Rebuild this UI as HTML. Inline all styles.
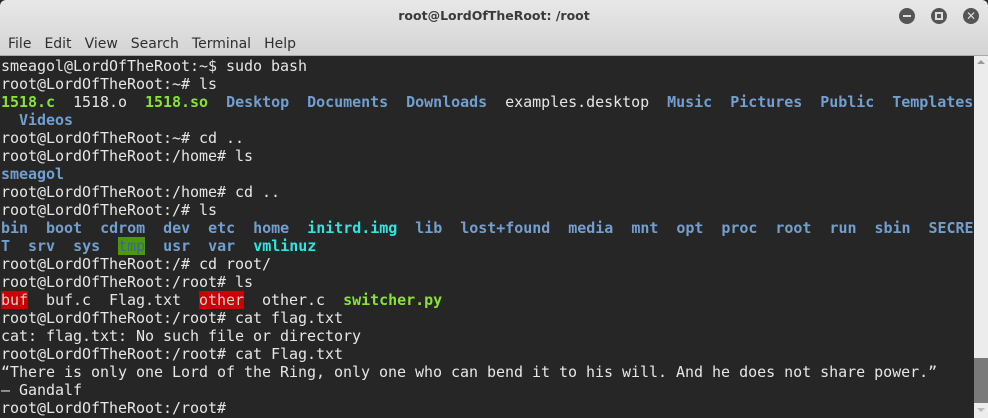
<!DOCTYPE html>
<html><head><meta charset="utf-8"><style>
*{margin:0;padding:0;box-sizing:border-box}
body{width:988px;height:418px;overflow:hidden;background:#262626;position:relative;font-family:"DejaVu Sans","Liberation Sans",sans-serif}
#top{position:absolute;left:0;top:0;width:988px;height:56px;background:linear-gradient(#e8e8e8,#d4d4d4);border-bottom:1px solid #a8a8a8;border-radius:6px 6px 0 0}
#title{position:absolute;top:8px;left:0;width:988px;text-align:center;font-weight:bold;font-size:12.5px;color:#3a3a3a}
#menu{position:absolute;top:36px;left:8px;font-size:14px;color:#2e2e2e}
#menu span{margin-right:13px}
.btn{position:absolute;top:8px;width:16px;height:16px;border-radius:50%;background:#555}
#term{position:absolute;left:1px;top:57px;font-family:"DejaVu Sans Mono","Liberation Mono",monospace;font-size:15px;letter-spacing:-0.03px;line-height:18px;color:#e6e6e6;white-space:pre}
.b{color:#729fcf;font-weight:bold}.g{color:#8ae234;font-weight:bold}.c{color:#34e2e2;font-weight:bold}
.r{background:#cc0000;color:#d3d7cf}.t{background:#4e9a06;color:#3465a4}
#sb{position:absolute;left:974px;top:56px;width:14px;height:362px;background:#ececec}
#thumb{position:absolute;left:974px;top:358px;width:14px;height:45px;background:#7a7a7a}
</style></head><body>
<div id="top">
<div id="title">root@LordOfTheRoot: /root</div>
<div id="menu"><span>File</span><span>Edit</span><span>View</span><span>Search</span><span>Terminal</span><span>Help</span></div>
<div class="btn" style="left:899px"><div style="position:absolute;left:4px;top:7px;width:8px;height:2px;background:#ddd"></div></div>
<div class="btn" style="left:931px"><div style="position:absolute;left:4px;top:4px;width:8px;height:8px;border:2px solid #ddd"></div></div>
<div class="btn" style="left:963px;color:#ddd;font-size:12px;line-height:16px;text-align:center;font-weight:bold">✕</div>
</div>
<div id="sb"></div><div id="thumb"></div>
<div style="position:absolute;left:977px;top:60px;width:0;height:0;border-left:4px solid transparent;border-right:4px solid transparent;border-bottom:4px solid #999"></div>
<div style="position:absolute;left:977px;top:408px;width:0;height:0;border-left:4px solid transparent;border-right:4px solid transparent;border-top:4px solid #bbb"></div>
<div id="term">smeagol@LordOfTheRoot:~$ sudo bash
root@LordOfTheRoot:~# ls
<span class="g">1518.c</span>  1518.o  <span class="g">1518.so</span>  <span class="b">Desktop</span>  <span class="b">Documents</span>  <span class="b">Downloads</span>  examples.desktop  <span class="b">Music</span>  <span class="b">Pictures</span>  <span class="b">Public</span>  <span class="b">Templates</span>
  <span class="b">Videos</span>
root@LordOfTheRoot:~# cd ..
root@LordOfTheRoot:/home# ls
<span class="b">smeagol</span>
root@LordOfTheRoot:/home# cd ..
root@LordOfTheRoot:/# ls
<span class="b">bin</span>  <span class="b">boot</span>  <span class="b">cdrom</span>  <span class="b">dev</span>  <span class="b">etc</span>  <span class="b">home</span>  <span class="c">initrd.img</span>  <span class="b">lib</span>  <span class="b">lost+found</span>  <span class="b">media</span>  <span class="b">mnt</span>  <span class="b">opt</span>  <span class="b">proc</span>  <span class="b">root</span>  <span class="b">run</span>  <span class="b">sbin</span>  <span class="b">SECRE</span>
<span class="b">T</span>  <span class="b">srv</span>  <span class="b">sys</span>  <span class="t">tmp</span>  <span class="b">usr</span>  <span class="b">var</span>  <span class="c">vmlinuz</span>
root@LordOfTheRoot:/# cd root/
root@LordOfTheRoot:/root# ls
<span class="r">buf</span>  buf.c  Flag.txt  <span class="r">other</span>  other.c  <span class="g">switcher.py</span>
root@LordOfTheRoot:/root# cat flag.txt
cat: flag.txt: No such file or directory
root@LordOfTheRoot:/root# cat Flag.txt
“There is only one Lord of the Ring, only one who can bend it to his will. And he does not share power.”
– Gandalf
root@LordOfTheRoot:/root# </div>
</body></html>
